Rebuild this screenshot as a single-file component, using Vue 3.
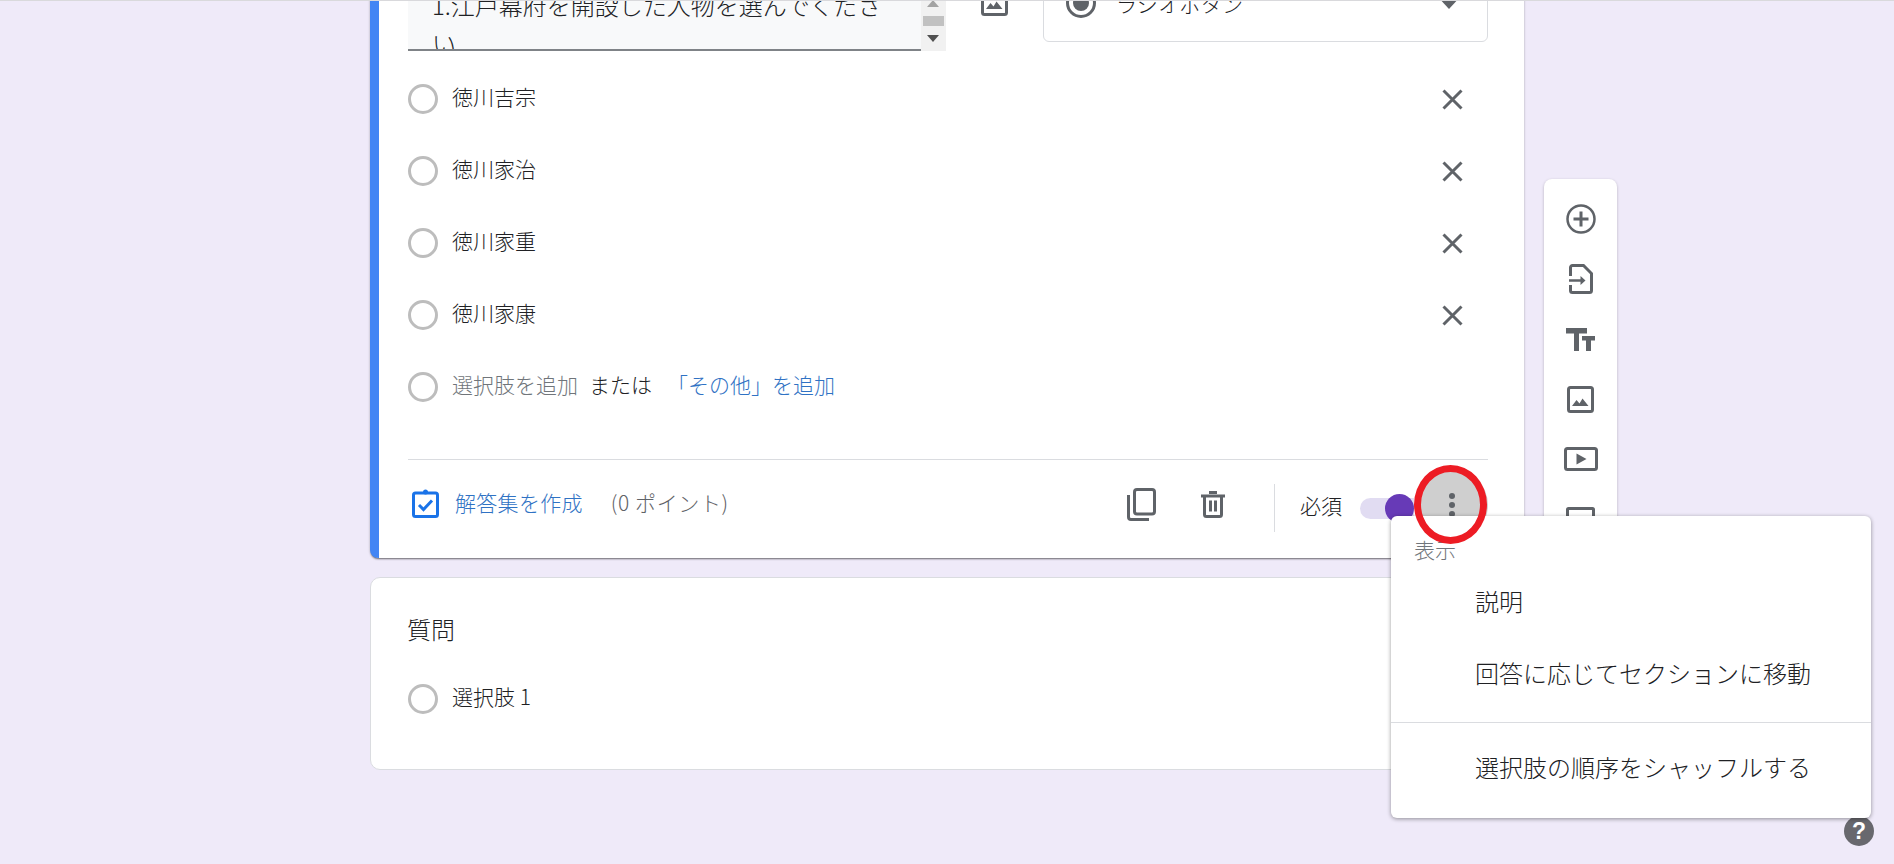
<script setup>
const options = ['徳川吉宗', '徳川家治', '徳川家重', '徳川家康']
</script>

<template>
  <div class="page">
    <div class="topline"></div>
    <div class="layout">
      <main class="column">
        <section class="card active">
          <div class="head">
            <div class="field">
              <div class="field-text">1.江戸幕府を開設した人物を選んでください</div>
              <div class="scrollbar">
                <span class="arrow up"></span>
                <span class="thumb"></span>
                <span class="arrow down"></span>
              </div>
            </div>
            <svg class="head-image" viewBox="0 0 27 27" width="27" height="27">
              <rect x="1.5" y="1.5" width="24" height="24" rx="2" fill="none" stroke="#5f6368" stroke-width="3" />
              <path d="M5 20l4.5-6 3 3.5 3-5 6 7.500z" fill="#5f6368" />
            </svg>
            <div class="select">
              <svg viewBox="0 0 30 30" width="30" height="30">
                <circle cx="15" cy="15" r="13.500" fill="none" stroke="#5f6368" stroke-width="3" />
                <circle cx="15" cy="15" r="8" fill="#5f6368" />
              </svg>
              <span class="select-label">ラジオボタン</span>
              <span class="select-caret"></span>
            </div>
          </div>

          <ul class="options">
            <li v-for="o in options" :key="o" class="row">
              <span class="radio"></span>
              <span class="label first">{{ o }}</span>
              <svg class="close" viewBox="0 0 21 21" width="21" height="21">
                <path d="M1.500 1.500l18 18M19.500 1.500l-18 18" stroke="#5f6368" stroke-width="3" fill="none" />
              </svg>
            </li>
            <li class="row">
              <span class="radio"></span>
              <span class="label first muted">選択肢を追加</span>
              <span class="label or">または</span>
              <span class="label link other">「その他」を追加</span>
            </li>
          </ul>

          <footer class="foot">
            <svg class="foot-check" viewBox="0 0 27 29" width="27" height="29">
              <rect x="1.500" y="4" width="24" height="23.500" rx="2" fill="none" stroke="#1a73e8" stroke-width="3" />
              <circle cx="13.500" cy="3" r="2.500" fill="#1a73e8" />
              <path d="M7 16l4.500 4.500 8.500-9" fill="none" stroke="#1a73e8" stroke-width="3" />
            </svg>
            <span class="label link answer">解答集を作成</span>
            <span class="label points">(0 ポイント)</span>

            <svg class="foot-copy" viewBox="0 0 29 33" width="29" height="33">
              <path d="M1.500 7v22a2.500 2.500 0 0 0 2.500 2.500h18" fill="none" stroke="#5f6368" stroke-width="3" />
              <rect x="7.500" y="1.500" width="20" height="24.500" rx="2.500" fill="none" stroke="#5f6368" stroke-width="3" />
            </svg>
            <svg class="foot-trash" viewBox="0 0 24 27" width="24" height="27">
              <path d="M0 3.500h24v3H0zM8 0h8v3H8z" fill="#5f6368" />
              <path d="M3.500 5v18.500a2 2 0 0 0 2 2h13a2 2 0 0 0 2-2V5" fill="none" stroke="#5f6368" stroke-width="3" />
              <path d="M9.500 9.500v11M14.500 9.500v11" stroke="#5f6368" stroke-width="3" fill="none" />
            </svg>
            <span class="foot-div"></span>
            <span class="label required">必須</span>
            <span class="toggle"><span class="knob"></span></span>
            <span class="more">
              <i></i><i></i><i></i>
            </span>
          </footer>
        </section>

        <section class="card plain">
          <div class="q-title">質問</div>
          <div class="row">
            <span class="radio"></span>
            <span class="label first">選択肢 1</span>
          </div>
        </section>
      </main>

      <aside class="tools">
        <div class="tool">
          <svg viewBox="0 0 30 30" width="30" height="30">
            <circle cx="15" cy="15" r="13.500" fill="none" stroke="#5f6368" stroke-width="2.500" />
            <path d="M15 7.500v15M7.500 15h15" stroke="#5f6368" stroke-width="3" fill="none" />
          </svg>
        </div>
        <div class="tool">
          <svg viewBox="0 0 24 30" width="24" height="30">
            <path d="M1.500 12V3.500a2 2 0 0 1 2-2H14.500L22.500 9.500V26.500a2 2 0 0 1-2 2H3.500a2 2 0 0 1-2-2V21" fill="none" stroke="#5f6368" stroke-width="3" />
            <path d="M0 16.500h12" stroke="#5f6368" stroke-width="2.500" />
            <path d="M11.500 12l5 4.500-5 4.500z" fill="#5f6368" />
          </svg>
        </div>
        <div class="tool">
          <svg viewBox="0 0 29 23" width="29" height="23">
            <path d="M0 0h21v5.500h-8V23H8V5.500H0zM16 8h13v4.500h-4V23h-5V12.500h-4z" fill="#5f6368" />
          </svg>
        </div>
        <div class="tool">
          <svg viewBox="0 0 27 27" width="27" height="27">
            <rect x="1.500" y="1.500" width="24" height="24" rx="2" fill="none" stroke="#5f6368" stroke-width="3" />
            <path d="M5 20l4.500-6 3 3.500 3-5 6 7.500z" fill="#5f6368" />
          </svg>
        </div>
        <div class="tool">
          <svg viewBox="0 0 34 24" width="34" height="24">
            <rect x="1.500" y="1.500" width="31" height="21" rx="2" fill="none" stroke="#5f6368" stroke-width="3" />
            <path d="M12.500 6.500l10 5.500-10 5.500z" fill="#5f6368" />
          </svg>
        </div>
        <div class="tool">
          <svg viewBox="0 0 29 24" width="29" height="24">
            <rect x="1.500" y="1.500" width="26" height="21" rx="1" fill="none" stroke="#5f6368" stroke-width="3" />
          </svg>
        </div>
      </aside>
    </div>

    <div class="menu">
      <div class="menu-head">表示</div>
      <div class="menu-item">説明</div>
      <div class="menu-item">回答に応じてセクションに移動</div>
      <div class="menu-sep"></div>
      <div class="menu-item">選択肢の順序をシャッフルする</div>
    </div>

    <div class="ring"></div>
    <div class="help">?</div>
  </div>
</template>

<style>
html, body { margin: 0; padding: 0; background: #efeaf9; }
</style>

<style scoped>
.page {
  position: relative;
  height: 864px;
  overflow: hidden;
  background: #efeaf9;
  font-family: "Noto Sans CJK JP", "Liberation Sans", sans-serif;
  font-weight: 300;
  color: #202124;
}
.topline {
  position: absolute;
  left: 0; right: 0; top: 0;
  height: 1px;
  background: #d9d9dc;
  z-index: 3;
}
.layout {
  display: flex;
  align-items: flex-start;
  padding-left: 370px;
  margin-top: -60px;
}
.column { width: 1154px; flex: none; }
.tools {
  width: 73px;
  margin: 239px 0 0 20px;
  padding: 10px 0 40px;
  background: #fff;
  border-radius: 8px;
  box-shadow: 0 1px 3px rgba(0,0,0,.25);
  display: flex;
  flex-direction: column;
}
.tool { height: 60px; display: flex; align-items: center; justify-content: center; }
.tool svg { display: block; }

.card { background: #fff; box-sizing: border-box; }
.active {
  border-left: 9px solid #4285f4;
  border-radius: 8px;
  padding: 0 36px 0 29px;
  height: 618px;
  box-shadow: 0 2px 2px -1px rgba(0,0,0,.5), 0 0 3px rgba(0,0,0,.2);
}
.plain {
  margin-top: 19px;
  height: 193px;
  border: 1px solid #dadce0;
  border-radius: 10px;
  padding: 33px 37px 0;
}

.head { display: flex; align-items: flex-start; height: 111px; }
.field { width: 538px; height: 111px; display: flex; flex: none; }
.field-text {
  width: 513px;
  height: 111px;
  box-sizing: border-box;
  padding: 46px 30px 0 24px;
  background: #f8f9fa;
  border-bottom: 2px solid #7f8387;
  overflow: hidden;
  font-size: 24px;
  line-height: 38px;
  color: #202124;
}
.scrollbar {
  width: 25px;
  background: #f1f1f1;
  position: relative;
}
.thumb {
  position: absolute;
  left: 2px; right: 2px; top: 76px;
  height: 10px;
  background: #c1c1c1;
}
.arrow {
  position: absolute;
  left: 6px;
  width: 0; height: 0;
  border-left: 6px solid transparent;
  border-right: 6px solid transparent;
}
.arrow.up { top: 60px; border-bottom: 7px solid #a3a3a3; }
.arrow.down { top: 95px; border-top: 7px solid #505050; }
.head-image { flex: none; margin: 49px 0 0 35px; display: block; }
.select {
  flex: 1;
  margin-left: 35px;
  height: 102px;
  box-sizing: border-box;
  border: 1px solid #dadce0;
  border-radius: 6px;
  padding: 47px 26px 0 22px;
  display: flex;
  align-items: flex-start;
}
.select svg { display: block; flex: none; }
.select-label { margin-left: 20px; font-size: 21px; line-height: 30px; letter-spacing: .3px; }
.select-caret {
  margin-left: auto;
  margin-top: 8px;
  width: 0; height: 0;
  border-left: 12px solid transparent;
  border-right: 12px solid transparent;
  border-top: 13px solid #5f6368;
}

.options { list-style: none; margin: 12px 0 36px; padding: 0; }
.row { height: 72px; display: flex; align-items: center; }
.radio {
  width: 30px; height: 30px;
  box-sizing: border-box;
  border: 3px solid #bdbdbd;
  border-radius: 50%;
  flex: none;
}
.label { font-size: 21px; line-height: 30px; white-space: nowrap; }
.row .label { padding-bottom: 6px; }
.row .first { margin-left: 14px; }
.close { margin-left: auto; margin-right: 25px; flex: none; }
.muted { color: #70757a; }
.link { color: #2f72c4; }
.row .or { margin-left: 11px; }
.row .other { margin-left: 15px; }

.foot {
  border-top: 1px solid #dadce0;
  height: 99px;
  box-sizing: border-box;
  display: flex;
  align-items: flex-start;
  padding-top: 24px;
}
.foot svg { display: block; flex: none; }
.foot-check { margin: 5px 0 0 4px; }
.answer { margin: 3px 0 0 16px; letter-spacing: .3px; }
.points { margin: 3px 0 0 28px; color: #5f6368; letter-spacing: .6px; }
.foot-copy { margin: 4px 0 0 auto; }
.foot-trash { margin: 7px 0 0 45px; }
.foot-div { width: 1px; height: 48px; background: #dadce0; margin-left: 49px; }
.required { margin: 6px 0 0 25px; }
.toggle {
  position: relative;
  width: 54px; height: 21px;
  margin: 14px 0 0 18px;
  border-radius: 11px 0 0 11px;
  background: #e1dcf2;
}
.knob {
  position: absolute;
  right: 0; top: -4px;
  width: 29px; height: 29px;
  border-radius: 50%;
  background: #673ab7;
}
.more {
  width: 72px; height: 72px;
  margin: -15px 0 0 2px;
  border-radius: 50%;
  background: #cfcfcf;
  display: flex;
  flex-direction: column;
  align-items: center;
  justify-content: center;
  gap: 3px;
}
.more i { width: 6px; height: 6px; border-radius: 50%; background: #5f6368; }

.q-title { font-size: 24px; line-height: 36px; margin: 0 0 16px -1px; }

.menu {
  position: absolute;
  left: 1391px; top: 516px;
  width: 480px; height: 302px;
  box-sizing: border-box;
  padding-top: 19px;
  background: #fff;
  border-radius: 6px;
  box-shadow: 0 1px 4px rgba(0,0,0,.4);
  z-index: 2;
  font-size: 24px;
}
.menu-head { height: 32px; line-height: 28px; font-size: 21px; padding-left: 23px; color: #70757a; }
.menu-item { height: 72px; line-height: 68px; padding-left: 84px; white-space: nowrap; }
.menu-sep { height: 1px; background: #dadce0; margin: 11px 0 10px; }

.ring {
  position: absolute;
  left: 1414px; top: 465px;
  width: 73px; height: 79px;
  box-sizing: border-box;
  border: 7px solid #ed1c24;
  border-radius: 50%;
  z-index: 4;
}
.help {
  position: absolute;
  left: 1844px; top: 816px;
  width: 30px; height: 30px;
  border-radius: 50%;
  background: #68686e;
  color: #fff;
  font: 700 23px/30px "Liberation Sans", sans-serif;
  text-align: center;
  z-index: 1;
}
</style>
